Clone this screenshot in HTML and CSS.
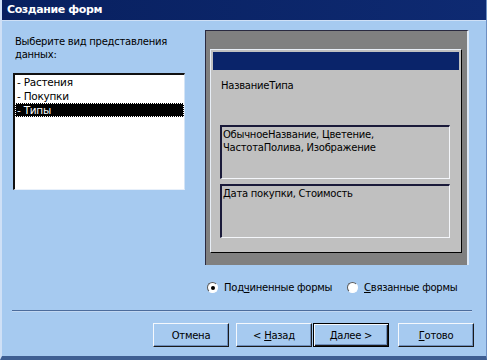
FILE: index.html
```html
<!DOCTYPE html>
<html lang="ru">
<head>
    <meta charset="UTF-8">
    <title>Создание форм</title>
    <link rel="stylesheet" href="styles.css">
</head>
<body>

    <div class="window">
        <div class="titlebar">Создание форм</div>

        <div class="content">
            <div class="left-col">
                <p class="prompt">Выберите вид представления данных:</p>
                <ul class="listbox">
                    <li>- Растения</li>
                    <li>- Покупки</li>
                    <li class="selected">- Типы</li>
                </ul>
            </div>

            <div class="right-col">
                <div class="preview">
                    <div class="form-panel">
                        <div class="form-caption"></div>
                        <div class="form-field">НазваниеТипа</div>
                        <div class="subform">ОбычноеНазвание, Цветение,<br>ЧастотаПолива, Изображение</div>
                        <div class="subform">Дата покупки, Стоимость</div>
                    </div>
                </div>

                <div class="options">
                    <label class="option"><span class="radio checked"></span>Под<u>ч</u>иненные формы</label>
                    <label class="option"><span class="radio"></span><u>С</u>вязанные формы</label>
                </div>
            </div>
        </div>

        <div class="separator"></div>

        <div class="buttons">
            <button class="btn btn-cancel">Отмена</button>
            <button class="btn btn-back">&lt; <u>Н</u>азад</button>
            <button class="btn btn-next default"><u>Д</u>алее &gt;</button>
            <button class="btn"><u>Г</u>отово</button>
        </div>
    </div>

</body>
</html>
```

FILE: styles.css
```css
body {
    margin: 0;
    padding: 0;
    font-family: "DejaVu Sans", sans-serif;
    font-size: 10px;
    letter-spacing: -0.25px;
    color: #000;
}

.window {
    width: 487px;
    height: 360px;
    box-sizing: border-box;
    background-color: #a6caf0;
    border-left: 2px solid #cfe0f6;
    border-right: 1px solid #6d8fc2;
    border-bottom: 4px solid #3e5e92;
}

.titlebar {
    height: 20px;
    line-height: 20px;
    padding-left: 5px;
    background: linear-gradient(to right, #08205f, #0e2a72);
    border-bottom: 1px solid #cfe0f6;
    color: #fff;
    font-weight: bold;
    font-size: 11px;
    letter-spacing: -0.4px;
}

.content {
    display: flex;
    padding: 9px 0 0 11px;
}

.left-col {
    width: 172px;
}

.prompt {
    margin: 5px 0 0 2px;
    line-height: 13px;
}

.listbox {
    list-style: none;
    margin: 12px 0 0 0;
    padding: 0;
    height: 117px;
    box-sizing: border-box;
    background-color: #fff;
    border-style: solid;
    border-width: 2px 1px 1px 2px;
    border-color: #111 #d4e4f6 #e8f0fa #111;
}

.listbox li {
    height: 14px;
    line-height: 14px;
    padding-left: 2px;
    font-size: 10.5px;
}

.listbox li.selected {
    background-color: #000;
    color: #fff;
    outline: 1px dotted #fff;
    outline-offset: -1px;
}

.right-col {
    margin-left: 20px;
}

.preview {
    width: 264px;
    height: 235px;
    box-sizing: border-box;
    background-color: #808080;
    border-top: 1px solid #2a2a40;
    border-left: 1px solid #2a2a40;
    border-right: 2px solid #dfe9f5;
    padding: 18px 5px 0 4px;
}

.form-panel {
    width: 252px;
    height: 204px;
    box-sizing: border-box;
    background-color: #c0c0c0;
    border: 1px solid;
    border-color: #e8eef6 #000 #000 #e8eef6;
    padding: 2px;
}

.form-caption {
    height: 18px;
    background-color: #0a246a;
}

.form-field {
    margin: 9px 0 0 8px;
    line-height: 13px;
}

.subform {
    width: 230px;
    height: 54px;
    box-sizing: border-box;
    margin: 33px 0 0 7px;
    padding: 1px 1px;
    line-height: 13px;
    border-style: solid;
    border-width: 2px 1px 1px 2px;
    border-color: #1a1a3a #f4f6fa #f4f6fa #1a1a3a;
}

.subform + .subform {
    margin-top: 5px;
}

.options {
    display: flex;
    margin-top: 16px;
    padding-left: 2px;
    line-height: 13px;
}

.option {
    display: flex;
    align-items: center;
}

.option:first-child {
    width: 140px;
}

.radio {
    width: 11px;
    height: 11px;
    box-sizing: border-box;
    border-radius: 50%;
    background-color: #fff;
    border: 1px solid;
    border-color: #5a5a5a #fff #fff #5a5a5a;
    margin-right: 6px;
    position: relative;
}

.radio.checked::after {
    content: "";
    position: absolute;
    left: 2.5px;
    top: 2.5px;
    width: 4px;
    height: 4px;
    border-radius: 50%;
    background-color: #000;
}

.separator {
    margin: 16px 0 0 10px;
    width: 460px;
    border-top: 1px solid #4c6c9c;
    border-bottom: 1px solid #c2d8f2;
}

.buttons {
    display: flex;
    margin-top: 11px;
    padding-left: 151px;
}

.btn {
    width: 76px;
    height: 24px;
    padding: 0;
    font-family: "DejaVu Sans", sans-serif;
    font-size: 10px;
    letter-spacing: -0.25px;
    color: #000;
    background-color: #a6caf0;
    border: 1px solid;
    border-color: #f4f8fd #1a1a1a #1a1a1a #f4f8fd;
    box-shadow: inset -1px -1px 0 #6e8fbd;
}

.btn-cancel {
    margin-right: 7px;
}

.btn-back {
    margin-right: 1px;
}

.btn-next {
    margin-right: 9px;
}

.btn.default {
    border-color: #000;
    box-shadow: inset 1px 1px 0 #f4f8fd, inset -1px -1px 0 #1a1a1a, inset -2px -2px 0 #6e8fbd;
}
```
